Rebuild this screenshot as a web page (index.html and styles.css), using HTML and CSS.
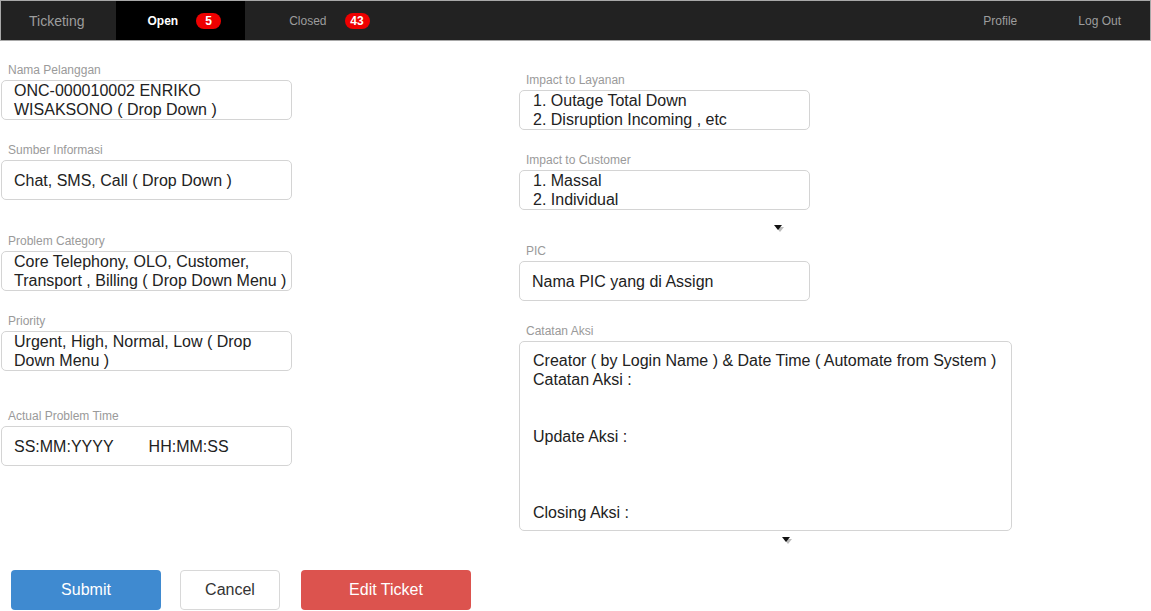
FILE: index.html
```html
<!DOCTYPE html>
<html lang="id">
<head>
<meta charset="utf-8">
<title>Ticketing</title>
<link rel="stylesheet" href="styles.css">
</head>
<body>
<nav class="navbar">
  <div class="nav-brand">Ticketing</div>
  <div class="nav-tab nav-tab-active"><span>Open</span><span class="badge">5</span></div>
  <div class="nav-tab nav-tab-closed"><span>Closed</span><span class="badge">43</span></div>
  <div class="nav-spacer"></div>
  <div class="nav-link">Profile</div>
  <div class="nav-link nav-link-last">Log Out</div>
</nav>

<main class="form">
  <div class="columns">
    <div class="col-left">
      <div class="field f-nama">
        <div class="label">Nama Pelanggan</div>
        <div class="box">ONC-000010002 ENRIKO<br>WISAKSONO ( Drop Down )</div>
      </div>
      <div class="field f-sumber">
        <div class="label">Sumber Informasi</div>
        <div class="box">Chat, SMS, Call ( Drop Down )</div>
      </div>
      <div class="field f-problem">
        <div class="label">Problem Category</div>
        <div class="box">Core Telephony, OLO, Customer,<br>Transport , Billing ( Drop Down Menu )</div>
      </div>
      <div class="field f-priority">
        <div class="label">Priority</div>
        <div class="box">Urgent, High, Normal, Low ( Drop<br>Down Menu )</div>
      </div>
      <div class="field f-time">
        <div class="label">Actual Problem Time</div>
        <div class="box"><span class="time-date">SS:MM:YYYY</span><span>HH:MM:SS</span></div>
      </div>
    </div>

    <div class="col-right">
      <div class="field f-layanan">
        <div class="label">Impact to Layanan</div>
        <div class="box box-list">1. Outage Total Down<br>2. Disruption Incoming , etc</div>
      </div>
      <div class="field f-customer">
        <div class="label">Impact to Customer</div>
        <div class="box box-list">1. Massal<br>2. Individual</div>
      </div>
      <div class="caret caret-1">
        <svg width="11" height="8" viewBox="0 0 11 8"><polygon points="2,2 10,2 6,7" fill="#bbb"/><polygon points="0,0 8,0 4,5" fill="#111"/></svg>
      </div>
      <div class="field f-pic">
        <div class="label">PIC</div>
        <div class="box">Nama PIC yang di Assign</div>
      </div>
      <div class="field f-catatan">
        <div class="label">Catatan Aksi</div>
        <div class="box box-notes">Creator ( by Login Name ) &amp; Date Time ( Automate from System )<br>Catatan Aksi :<br><br><br>Update Aksi :<br><br><br><br>Closing Aksi :</div>
      </div>
      <div class="caret caret-2">
        <svg width="11" height="8" viewBox="0 0 11 8"><polygon points="2,2 10,2 6,7" fill="#bbb"/><polygon points="0,0 8,0 4,5" fill="#111"/></svg>
      </div>
    </div>
  </div>

  <div class="actions">
    <button class="btn btn-submit">Submit</button>
    <button class="btn btn-cancel">Cancel</button>
    <button class="btn btn-edit">Edit Ticket</button>
  </div>
</main>
</body>
</html>
```

FILE: styles.css
```css
* { box-sizing: border-box; }

html, body {
  margin: 0;
  padding: 0;
  background: #fff;
  font-family: "Liberation Sans", Arial, sans-serif;
}

.navbar {
  display: flex;
  align-items: stretch;
  height: 41px;
  background: #222;
  border: 1px solid #a8a8a8;
  font-size: 12px;
  color: #9d9d9d;
}

.nav-brand {
  display: flex;
  align-items: center;
  padding: 0 31px 0 28px;
  font-size: 14px;
}

.nav-tab {
  display: flex;
  align-items: center;
  gap: 18px;
}

.nav-tab-active {
  background: #000;
  color: #fff;
  font-weight: bold;
  padding: 0 24px 0 32px;
}

.nav-tab-closed {
  padding-left: 44px;
  gap: 18px;
}

.badge {
  display: inline-flex;
  align-items: center;
  justify-content: center;
  min-width: 25px;
  height: 16px;
  padding: 0 5px;
  border-radius: 8px;
  background: #ee0000;
  color: #fff;
  font-weight: bold;
  font-size: 12px;
}

.nav-spacer { flex: 1; }

.nav-link {
  display: flex;
  align-items: center;
  margin-right: 61px;
}

.nav-link-last { margin-right: 29px; }

.form { padding: 0; }

.columns {
  display: flex;
  align-items: flex-start;
}

.col-left {
  width: 292px;
  padding-left: 1px;
  padding-top: 22px;
}

.col-right {
  width: 493px;
  margin-left: 227px;
  padding-top: 32px;
}

.label {
  font-size: 12px;
  line-height: 14px;
  height: 14px;
  color: #9a9a9a;
  margin-bottom: 3px;
  padding-left: 7px;
}

.box {
  display: flex;
  flex-direction: column;
  justify-content: center;
  height: 40px;
  border: 1px solid #d4d4d4;
  border-radius: 5px;
  padding: 0 12px;
  font-size: 16px;
  line-height: 19px;
  color: #222;
  white-space: nowrap;
}

.col-left .box { width: 291px; }
.col-right .box { width: 291px; }

.f-time .box {
  flex-direction: row;
  align-items: center;
  justify-content: flex-start;
}

.time-date { margin-right: 35px; }

.box-list { padding-left: 13px; }

.f-sumber { margin-top: 23px; }
.f-problem { margin-top: 34px; }
.f-priority { margin-top: 23px; }
.f-time { margin-top: 38px; }

.f-customer { margin-top: 23px; }
.f-pic { margin-top: 11px; }
.f-catatan { margin-top: 23px; }

.col-right .box-notes {
  width: 493px;
  height: 190px;
  justify-content: flex-start;
  padding: 9px 12px 0 13px;
  display: block;
}

.caret {
  height: 8px;
  line-height: 0;
}

.caret svg { display: block; }

.caret-1 { margin-top: 15px; padding-left: 255px; }
.caret-2 { margin-top: 6px; padding-left: 263px; }

.actions {
  display: flex;
  align-items: center;
  padding-left: 11px;
  margin-top: 25px;
}

.btn {
  height: 40px;
  border-radius: 4px;
  font-family: "Liberation Sans", Arial, sans-serif;
  font-size: 16px;
  border: 1px solid transparent;
  padding: 0;
}

.btn-submit {
  width: 150px;
  background: #3f8ad0;
  color: #fff;
}

.btn-cancel {
  width: 100px;
  margin-left: 19px;
  background: #fff;
  color: #333;
  border-color: #d8d8d8;
}

.btn-edit {
  width: 170px;
  margin-left: 21px;
  background: #dc534e;
  color: #fff;
}
```
